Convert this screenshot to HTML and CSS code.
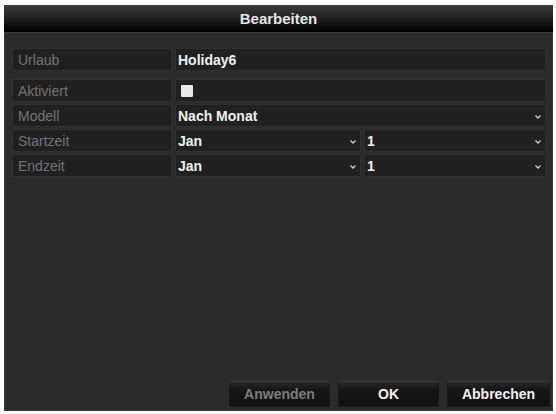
FILE: index.html
```html
<!DOCTYPE html>
<html>
<head>
<meta charset="utf-8">
<link rel="stylesheet" href="styles.css">
</head>
<body>
<div class="frame">
  <div class="dialog">
    <div class="titlebar">Bearbeiten</div>
    <div class="form">
      <div class="row first">
        <div class="label">Urlaub</div>
        <div class="value">Holiday6</div>
      </div>
      <div class="row">
        <div class="label">Aktiviert</div>
        <div class="value"><span class="check"></span></div>
      </div>
      <div class="row">
        <div class="label">Modell</div>
        <div class="value select">Nach Monat<svg class="chev" viewBox="0 0 6 4"><path d="M0.5 0.5 L3 3 L5.5 0.5" fill="none" stroke="#cfcfcf" stroke-width="1.3"/></svg></div>
      </div>
      <div class="row">
        <div class="label">Startzeit</div>
        <div class="split">
          <div class="value select">Jan<svg class="chev" viewBox="0 0 6 4"><path d="M0.5 0.5 L3 3 L5.5 0.5" fill="none" stroke="#cfcfcf" stroke-width="1.3"/></svg></div>
          <div class="value select">1<svg class="chev" viewBox="0 0 6 4"><path d="M0.5 0.5 L3 3 L5.5 0.5" fill="none" stroke="#cfcfcf" stroke-width="1.3"/></svg></div>
        </div>
      </div>
      <div class="row">
        <div class="label">Endzeit</div>
        <div class="split">
          <div class="value select">Jan<svg class="chev" viewBox="0 0 6 4"><path d="M0.5 0.5 L3 3 L5.5 0.5" fill="none" stroke="#cfcfcf" stroke-width="1.3"/></svg></div>
          <div class="value select">1<svg class="chev" viewBox="0 0 6 4"><path d="M0.5 0.5 L3 3 L5.5 0.5" fill="none" stroke="#cfcfcf" stroke-width="1.3"/></svg></div>
        </div>
      </div>
    </div>
    <div class="buttons">
      <div class="btn disabled">Anwenden</div>
      <div class="btn">OK</div>
      <div class="btn">Abbrechen</div>
    </div>
  </div>
</div>
</body>
</html>
```
FILE: styles.css
```css
html, body {
  margin: 0;
  padding: 0;
  background: #ffffff;
}
body {
  font-family: "Liberation Sans", Arial, sans-serif;
}
.frame {
  width: 556px;
  height: 414px;
  box-sizing: border-box;
  padding: 5px 3px 3px 4px;
}
.dialog {
  height: 406px;
  background: #2b2b2b;
  display: flex;
  flex-direction: column;
  box-shadow: inset 0 0 0 1px #3a3a3a;
}
.titlebar {
  height: 27px;
  flex: none;
  background: linear-gradient(#3c3c3c 0%, #262626 40%, #0a0a0a 85%, #000 100%);
  color: #e6e6e6;
  font-weight: bold;
  font-size: 15px;
  display: flex;
  align-items: center;
  justify-content: center;
  border-bottom: 1px solid #3d3d3d;
}
.form {
  padding: 15px 7px 0 8px;
  display: flex;
  flex-direction: column;
  gap: 2px;
}
.row {
  display: flex;
  gap: 3px;
  height: 23px;
}
.row.first {
  margin-bottom: 6px;
}
.label {
  width: 160px;
  flex: none;
  background: #202020;
  border: 1px solid #303030;
  box-sizing: border-box;
  color: #747474;
  font-size: 14px;
  padding-left: 5px;
  display: flex;
  align-items: center;
}
.value {
  flex: 1;
  background: #202020;
  border: 1px solid #303030;
  box-sizing: border-box;
  color: #f0f0f0;
  font-size: 14px;
  font-weight: bold;
  padding-left: 2px;
  display: flex;
  align-items: center;
}
.split {
  flex: 1;
  display: flex;
  gap: 3px;
}
.split .value:first-child {
  flex: none;
  width: 186px;
}
.select {
  padding-right: 4px;
}
.chev {
  width: 6px;
  height: 4px;
  margin-left: auto;
  margin-top: 3px;
}
.check {
  width: 12px;
  height: 12px;
  background: #e8e8e8;
  border-radius: 1px;
  margin-left: 3px;
}
.buttons {
  margin-top: auto;
  display: flex;
  justify-content: flex-end;
  gap: 8px;
  padding: 0 3px 4px 0;
}
.btn {
  width: 101px;
  height: 26px;
  box-sizing: border-box;
  background: linear-gradient(#2a2a2a 0%, #161616 30%, #111 100%);
  border: 1px solid #1a1a1a;
  border-top-color: #3a3a3a;
  color: #f2f2f2;
  font-weight: bold;
  font-size: 14px;
  display: flex;
  align-items: center;
  justify-content: center;
}
.btn.disabled {
  color: #7d7d7d;
}
.btn:last-child {
  width: 103px;
}
```
